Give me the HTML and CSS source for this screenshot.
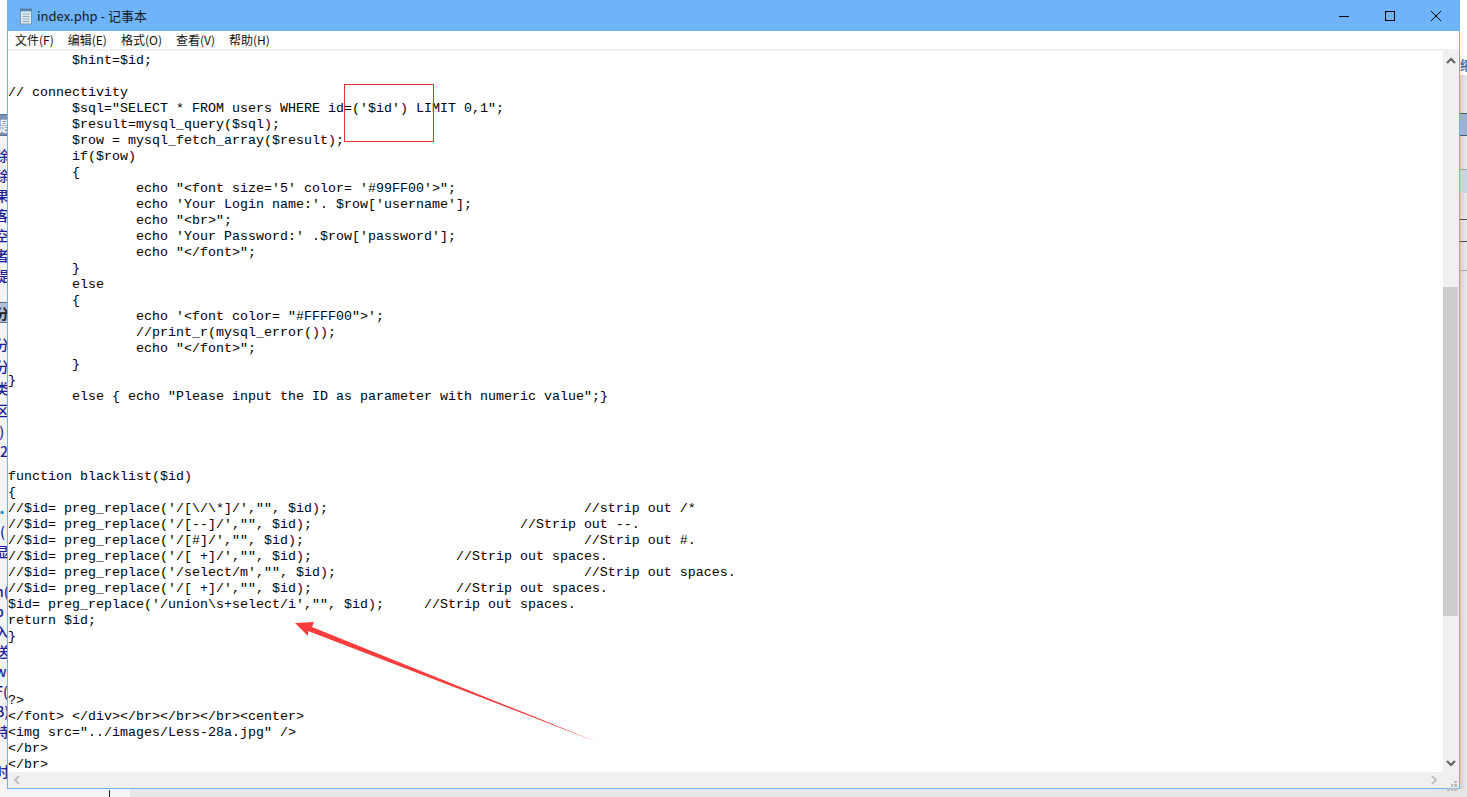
FILE: index.html
```html
<!DOCTYPE html>
<html lang="zh-CN">
<head>
<meta charset="utf-8">
<title>index.php - 记事本</title>
<link rel="stylesheet" href="styles.css">
</head>
<body>
<div class="desktop">
  <div class="strip-left">
    <div class="lead"></div>
    <div class="band">提</div>
    <div class="rows rows-a">
      <div>除</div><div>除</div><div>果</div><div>客</div><div>空</div><div>者</div><div>提</div>
    </div>
    <div class="band band-2">分</div>
    <div class="rows rows-b">
      <div>分</div><div>分</div><div>类</div><div>区</div><div class="tight">l)</div><div class="tight">(2</div><div class="tight">)</div><div class="tight">(</div><div class="tight dot">•</div><div class="tight">((</div><div class="tight">显</div><div class="tight">)</div><div class="tight">n(</div><div class="tight">b</div><div class="tight">入</div><div class="tight">送</div><div class="tight">w</div><div class="tight">F(</div><div class="tight">B)</div><div class="tight">持</div><div class="tight">)</div><div class="tight">时</div>
    </div>
  </div>
  <div class="strip-right">
    <div class="r-top"></div>
    <div class="r-glyph">缩</div>
    <div class="r-gap1"></div>
    <div class="r-band"></div>
    <div class="r-gap2"></div>
    <div class="r-light"></div>
    <div class="r-gap3"></div>
    <div class="r-line"></div>
    <div class="r-gap4"></div>
    <div class="r-line"></div>
    <div class="r-gap5"></div>
    <div class="r-line r-line-soft"></div>
  </div>
  <div class="strip-bottom"><span class="bottom-line"></span><span class="bottom-dark"></span></div>

  <div class="window">
    <header class="titlebar">
      <svg class="app-icon" width="14" height="17" viewBox="0 0 14 17">
        <rect x="1.5" y="1.5" width="11" height="14.5" fill="#dcecf5" stroke="#7f98a8"/>
        <rect x="1" y="1" width="12" height="2.5" fill="#5d9fd0"/>
        <path d="M3.5 6h7M3.5 8.5h7M3.5 11h7M3.5 13.500h7" stroke="#8fa9b8"/>
        <path d="M2 0.500v2M4 0.500v2M6 0.500v2M8 0.500v2M10 0.500v2M12 0.500v2" stroke="#4a5a68"/>
      </svg>
      <span class="title">index.php - 记事本</span>
      <div class="controls">
        <button class="ctl" aria-label="最小化"><svg width="12" height="12" viewBox="0 0 12 12"><path d="M1 6.500h10" stroke="#000"/></svg></button>
        <button class="ctl" aria-label="最大化"><svg width="12" height="12" viewBox="0 0 12 12"><rect x="1.500" y="1.500" width="9" height="9" fill="none" stroke="#000"/></svg></button>
        <button class="ctl" aria-label="关闭"><svg width="12" height="12" viewBox="0 0 12 12"><path d="M1 1l10 10M11 1L1 11" stroke="#000" stroke-width="1"/></svg></button>
      </div>
    </header>
    <nav class="menubar">
      <span>文件(F)</span><span>编辑(E)</span><span>格式(O)</span><span>查看(V)</span><span>帮助(H)</span>
    </nav>
    <div class="editor">
      <pre class="code">	$hint=$id;

// connectivity
	$sql="SELECT * FROM users WHERE id=('$id') LIMIT 0,1";
	$result=mysql_query($sql);
	$row = mysql_fetch_array($result);
	if($row)
	{
		echo "&lt;font size='5' color= '#99FF00'&gt;";
		echo 'Your Login name:'. $row['username'];
		echo "&lt;br&gt;";
		echo 'Your Password:' .$row['password'];
		echo "&lt;/font&gt;";
	}
	else
	{
		echo '&lt;font color= "#FFFF00"&gt;';
		//print_r(mysql_error());
		echo "&lt;/font&gt;";
	}
}
	else { echo "Please input the ID as parameter with numeric value";}




function blacklist($id)
{
//$id= preg_replace('/[\/\*]/',"", $id);				//strip out /*
//$id= preg_replace('/[--]/',"", $id);				//Strip out --.
//$id= preg_replace('/[#]/',"", $id);					//Strip out #.
//$id= preg_replace('/[ +]/',"", $id);			//Strip out spaces.
//$id= preg_replace('/select/m',"", $id);				//Strip out spaces.
//$id= preg_replace('/[ +]/',"", $id);			//Strip out spaces.
$id= preg_replace('/union\s+select/i',"", $id);     //Strip out spaces.
return $id;
}



?&gt;
&lt;/font&gt; &lt;/div&gt;&lt;/br&gt;&lt;/br&gt;&lt;/br&gt;&lt;center&gt;
&lt;img src="../images/Less-28a.jpg" /&gt;
&lt;/br&gt;
&lt;/br&gt;</pre>
      <div class="vscroll">
        <svg class="arrow" width="16" height="17" viewBox="0 0 16 17"><path d="M4 12l4-4 4 4" fill="none" stroke="#606060" stroke-width="2"/></svg>
        <div class="v-space"></div>
        <div class="v-thumb"></div>
        <div class="v-fill"></div>
        <svg class="arrow" width="16" height="17" viewBox="0 0 16 17"><path d="M4 6l4 4 4-4" fill="none" stroke="#606060" stroke-width="2"/></svg>
      </div>
      <div class="hscroll">
        <svg class="arrow" width="17" height="16" viewBox="0 0 17 16"><path d="M11 4L7 8l4 4" fill="none" stroke="#c0c0c0" stroke-width="2"/></svg>
        <svg class="arrow" width="17" height="16" viewBox="0 0 17 16"><path d="M6 4l4 4-4 4" fill="none" stroke="#c0c0c0" stroke-width="2"/></svg>
      </div>
      <div class="corner">
        <svg width="16" height="16" viewBox="0 0 16 16"><path d="M11 6h3v2h-3zM8 9h2v3H8zM11 9h3v3h-3zM4 13h3v3H4zM8 13h2v3H8zM11 13h3v3h-3z" fill="#bcbcbc"/></svg>
      </div>
    </div>
  </div>

  <svg class="marks" width="1467" height="797" viewBox="0 0 1467 797">
    <rect x="344.500" y="84.500" width="89" height="57" fill="none" stroke="#f03030"/>
    <path d="M295 623L314 622L312 627L597 742L308 631L308 636Z" fill="#f93c3c"/>
  </svg>
</div>
</body>
</html>
```

FILE: styles.css
```css
* {
  box-sizing: border-box;
}

html,
body {
  margin: 0;
  padding: 0;
  height: 100%;
  overflow: hidden;
}

.desktop {
  position: relative;
  width: 1467px;
  height: 797px;
  background: #f2f2f2;
  overflow: hidden;
  font-family: "Noto Sans CJK SC", "Noto Sans", sans-serif;
}

/* What is left visible of the windows behind notepad */
.strip-left {
  position: absolute;
  left: 0;
  top: 0;
  width: 7px;
  height: 797px;
  overflow: hidden;
  background: #f4f4f4;
  font-size: 14px;
  font-weight: 500;
  color: #1c1c9a;
  white-space: nowrap;
}

.strip-left .rows div,
.strip-left .band {
  overflow: hidden;
  text-indent: -5px;
}

.lead {
  height: 114px;
  background: #ffffff;
}

.band {
  height: 22px;
  line-height: 20px;
  background: #7f90b6;
  color: #f4f4f4;
  font-weight: 700;
  border-top: 1px solid #5f6f90;
  border-bottom: 1px solid #5f6f90;
}

.band-2 {
  height: 21px;
  background: #b4c0d8;
  color: #222222;
}

.rows-a {
  padding-top: 9px;
  height: 166px;
}

.rows-a div {
  height: 20px;
  line-height: 20px;
}

.rows-b {
  padding-top: 10px;
}

.rows-b div {
  height: 22px;
  line-height: 22px;
}

.rows-b .tight {
  height: 20px;
  line-height: 20px;
}

.rows-b .dot {
  color: #2090d0;
}

.strip-right {
  position: absolute;
  right: 0;
  top: 0;
  width: 7px;
  height: 797px;
  overflow: hidden;
  background: linear-gradient(90deg, #d0d0d0, #ececec);
  display: flex;
  flex-direction: column;
}

.r-top {
  height: 55px;
  flex: none;
  background: #ffffff;
}

.r-glyph {
  height: 20px;
  flex: none;
  line-height: 20px;
  background: #ffffff;
  color: #4a6fa8;
  font-size: 13px;
  font-weight: 700;
  overflow: hidden;
}

.r-gap1 {
  height: 38px;
  flex: none;
}

.r-band {
  height: 23px;
  flex: none;
  background: #9fb0d2;
  border-top: 1px solid #50586a;
  border-bottom: 1px solid #50586a;
}

.r-gap2 {
  height: 33px;
  flex: none;
}

.r-light {
  height: 24px;
  flex: none;
  background: #c8d4e0;
  border-top: 1px solid #a0a0a0;
}

.r-gap3 {
  height: 26px;
  flex: none;
}

.r-line {
  height: 1px;
  flex: none;
  background: #505050;
}

.r-gap4 {
  height: 21px;
  flex: none;
}

.r-gap5 {
  height: 28px;
  flex: none;
}

.r-line-soft {
  background: #a8a8a8;
}

.strip-bottom {
  position: absolute;
  left: 0;
  right: 0;
  bottom: 0;
  height: 8px;
  background: #f4f4f4;
}

.bottom-line {
  position: absolute;
  left: 109px;
  top: 1px;
  width: 1px;
  height: 7px;
  background: #222222;
}

.bottom-dark {
  position: absolute;
  left: 130px;
  right: 0;
  top: 0;
  height: 8px;
  background: #e6e6e6;
}

/* Notepad window */
.window {
  position: absolute;
  left: 7px;
  top: 0;
  width: 1453px;
  height: 789px;
  display: flex;
  flex-direction: column;
  background: #ffffff;
  border-left: 1px solid #6db2f8;
  border-right: 1px solid #6db2f8;
  border-bottom: 1px solid #6db2f8;
}

.titlebar {
  height: 31px;
  flex: none;
  margin-left: -1px;
  margin-right: -1px;
  display: flex;
  align-items: center;
  background: #6fb3fb;
  padding-left: 12px;
}

.app-icon {
  flex: none;
  margin-right: 4px;
  margin-top: 1px;
}

.title {
  font-size: 13px;
  line-height: 31px;
  color: #1a1a1a;
}

.controls {
  margin-left: auto;
  margin-right: 1px;
  display: flex;
}

.ctl {
  width: 46px;
  height: 30px;
  padding: 0;
  border: 0;
  background: transparent;
  display: flex;
  align-items: center;
  justify-content: center;
}

.menubar {
  height: 20px;
  flex: none;
  display: flex;
  align-items: center;
  background: #ffffff;
  border-bottom: 2px solid #f0f0f0;
  font-size: 12px;
  color: #111111;
}

.menubar span {
  padding: 0 7px;
  line-height: 18px;
}

.editor {
  flex: 1;
  min-height: 0;
  display: grid;
  grid-template-columns: 1fr 16px;
  grid-template-rows: 1fr 16px;
}

.code {
  margin: 0;
  padding: 2px 0 0 0;
  overflow: hidden;
  font-family: "Liberation Mono", "DejaVu Sans Mono", monospace;
  font-size: 13.33px;
  line-height: 16px;
  tab-size: 8;
  color: #000000;
  background: #ffffff;
}

.vscroll {
  display: flex;
  flex-direction: column;
  background: #f0f0f0;
}

.arrow {
  display: block;
  flex: none;
}

.v-space {
  height: 219px;
  flex: none;
}

.v-thumb {
  height: 329px;
  flex: none;
  width: 15px;
  background: #cdcdcd;
}

.v-fill {
  flex: 1;
}

.hscroll {
  display: flex;
  justify-content: space-between;
  background: #f0f0f0;
}

.corner {
  background: #f0f0f0;
}

.marks {
  position: absolute;
  left: 0;
  top: 0;
  pointer-events: none;
}
```
